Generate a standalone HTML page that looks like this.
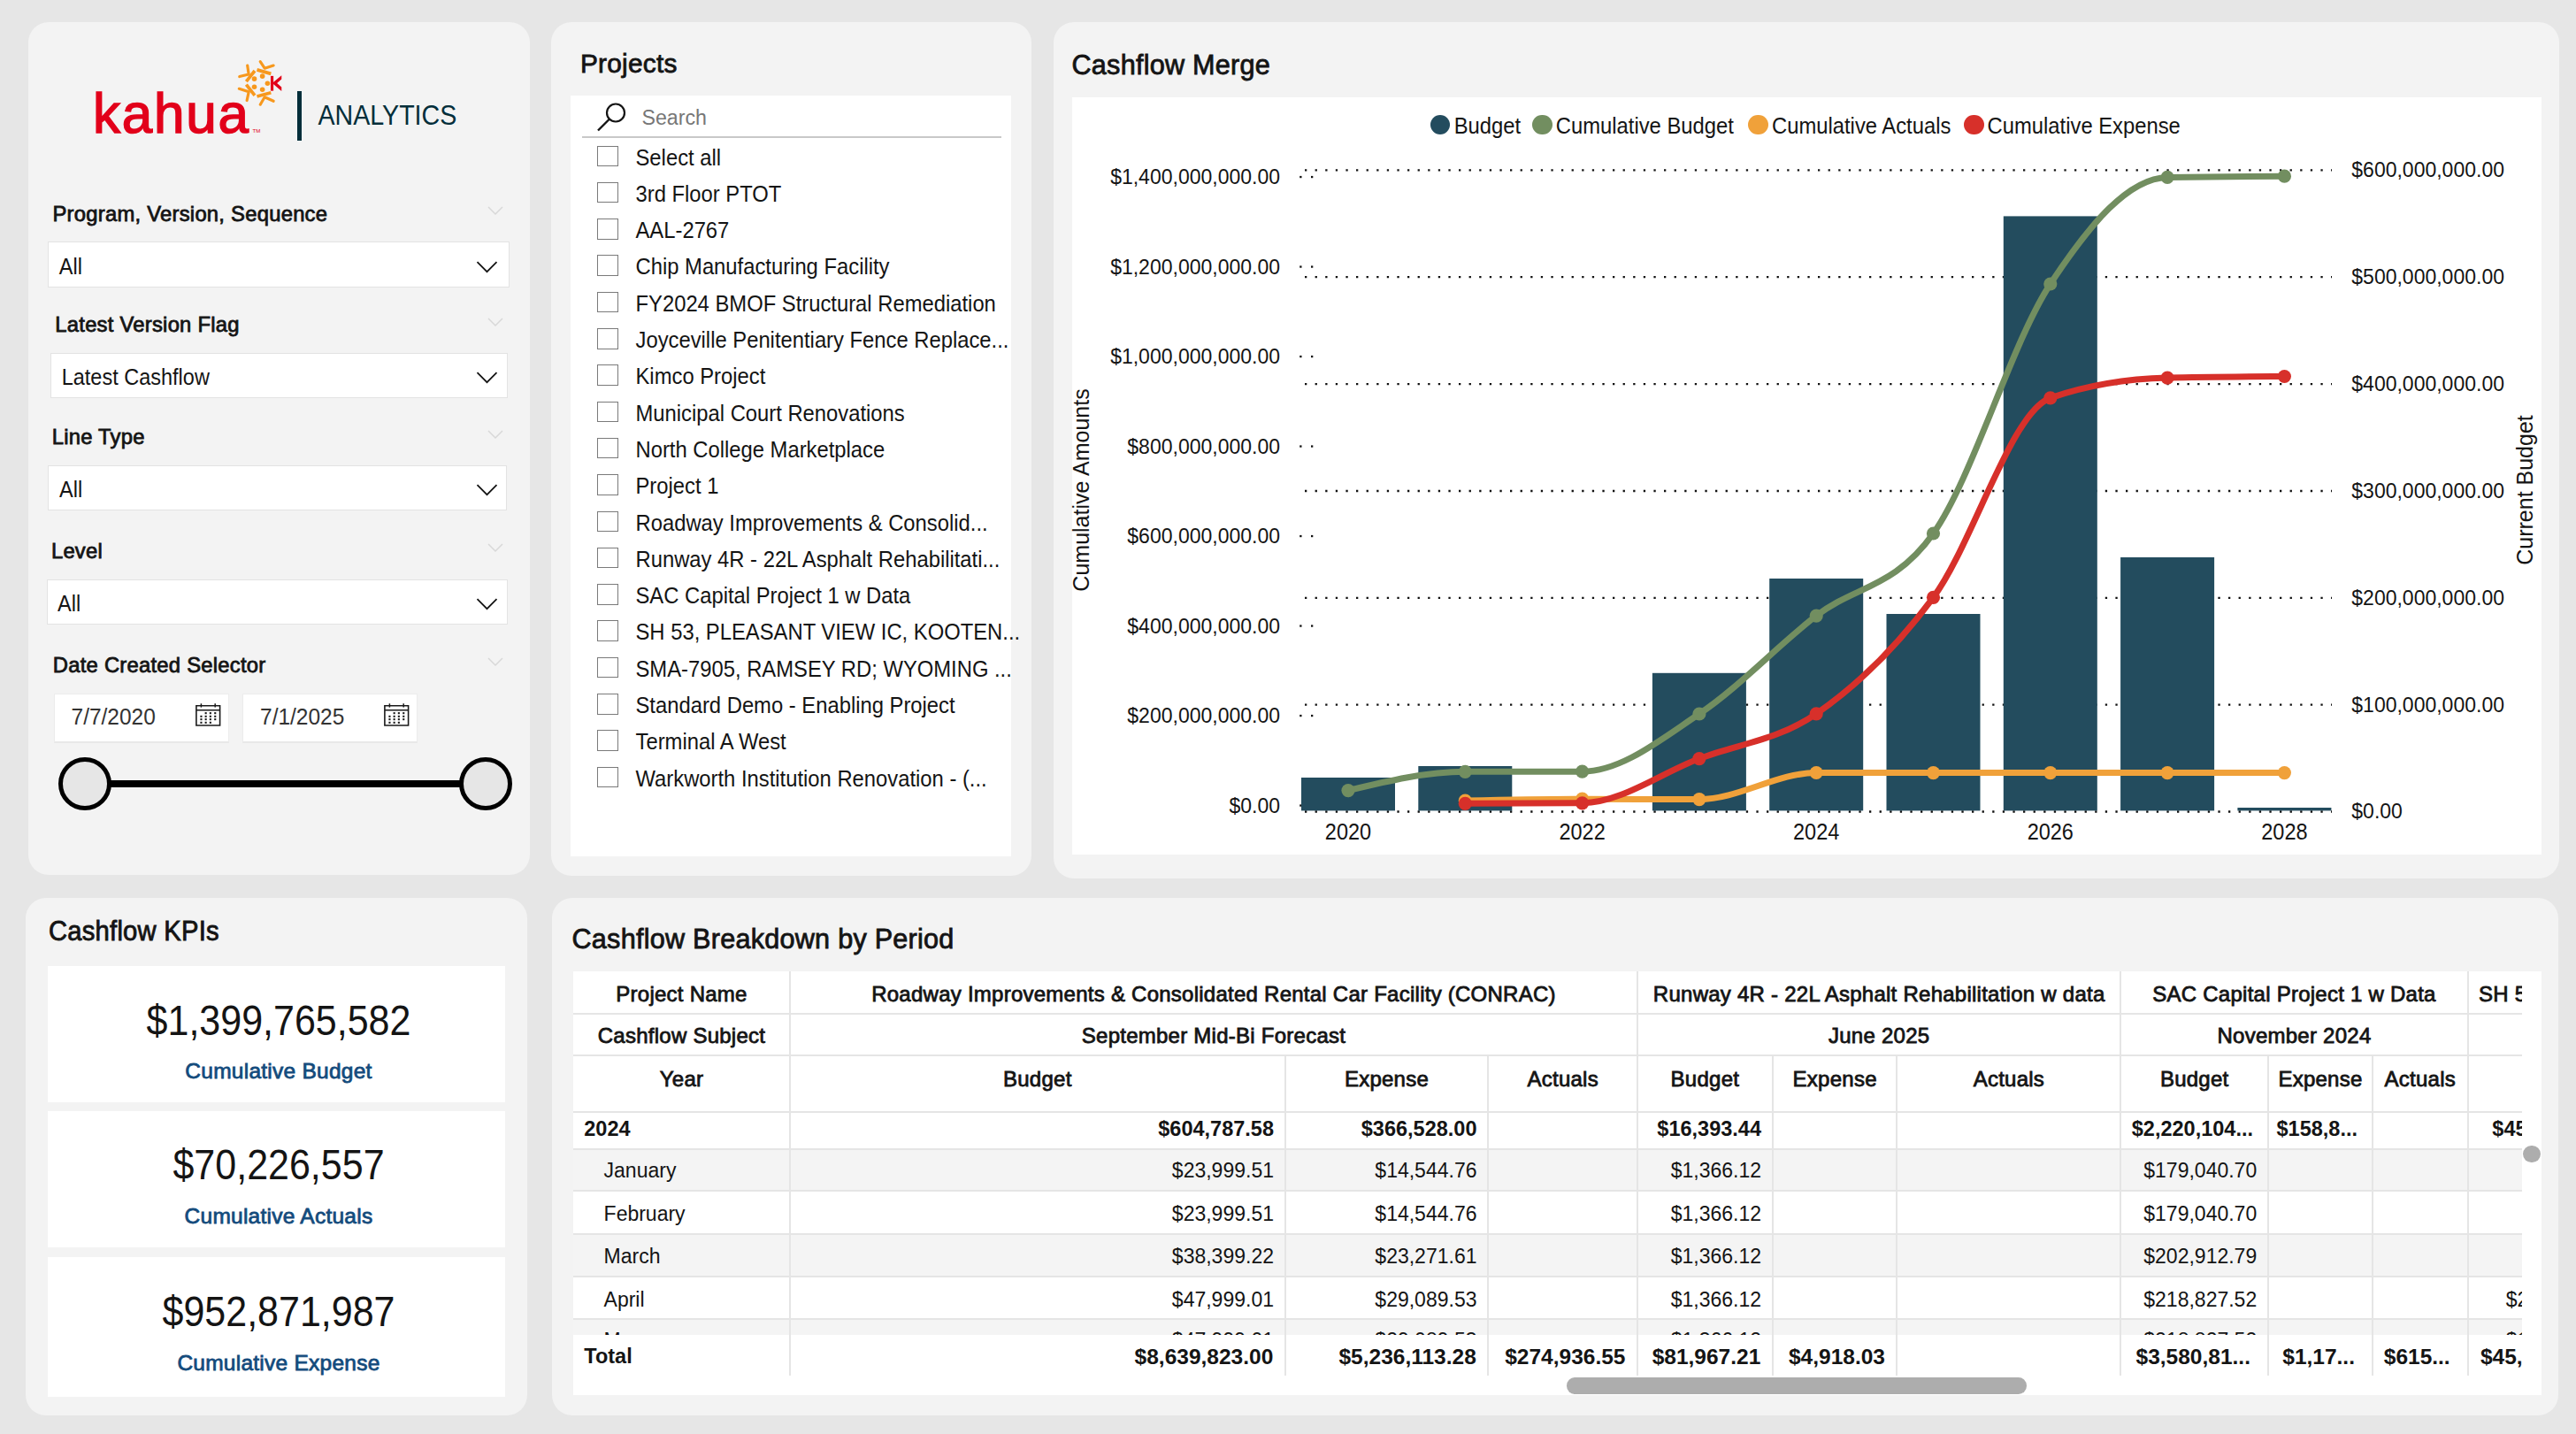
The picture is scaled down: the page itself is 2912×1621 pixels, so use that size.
<!DOCTYPE html>
<html><head><meta charset="utf-8"><title>Cashflow Dashboard</title>
<style>
html,body{margin:0;padding:0;}
body{width:2912px;height:1621px;background:#e6e6e6;position:relative;overflow:hidden;font-family:"Liberation Sans",sans-serif;}
.r{position:absolute;}
.t{position:absolute;white-space:nowrap;line-height:1;font-family:"Liberation Sans",sans-serif;}
</style></head><body>
<div class="r" style="left:32.0px;top:24.5px;width:567.0px;height:964.5px;background:#f3f3f3;border-radius:23px;"></div>
<svg class="r" style="left:90px;top:50px;width:240px;height:120px" viewBox="0 0 2576 1288">
<text x="160" y="1078" font-family="Liberation Sans" font-size="666" fill="#e2001a" stroke="#e2001a" stroke-width="16" letter-spacing="19">kahua</text>
<text x="2098" y="1078" font-family="Liberation Sans" font-size="66" fill="#e2001a">TM</text>
<g stroke="#f7981d" stroke-width="40" fill="none" stroke-linecap="butt">
<line x1="2022" y1="452" x2="2125" y2="322"/>
<line x1="2152" y1="310" x2="2322" y2="358"/>
<line x1="2022" y1="490" x2="2125" y2="622"/>
<line x1="2152" y1="634" x2="2322" y2="588"/>
</g>
<g stroke="#f7981d" stroke-width="34" fill="none" stroke-linecap="round" stroke-linejoin="round">
<path d="M2036 258 L2052 365 L1940 392"/>
<path d="M2192 210 L2245 292 L2352 258"/>
<path d="M1935 540 L2052 578 L2030 682"/>
<path d="M2192 732 L2245 642 L2352 690"/>
</g>
<g fill="#f7981d"><circle cx="2120" cy="420" r="30"/><circle cx="2218" cy="388" r="30"/><circle cx="2280" cy="475" r="30"/><circle cx="2218" cy="550" r="30"/><circle cx="2120" cy="518" r="30"/></g>
<rect x="2318" y="385" width="34" height="180" fill="#e2001a"/>
<path d="M2350 462 L2450 378 L2450 425 L2395 472 L2450 520 L2450 568 L2350 482 Z" fill="#e2001a"/>
</svg>
<div class="r" style="left:336.0px;top:103.0px;width:5.3px;height:55.7px;background:#032e3a;"></div>
<div class="t" style="top:116.6px;font-size:28.6px;font-weight:400;color:#032e3a;transform:scaleY(1.07);transform-origin:0 24.21px;left:359.5px;">ANALYTICS</div>
<div class="t" style="top:229.9px;font-size:23.8px;font-weight:400;color:#141414;-webkit-text-stroke:0.8px #141414;letter-spacing:0.25px;left:59.5px;">Program, Version, Sequence</div>
<svg class="r" style="left:551px;top:233px;width:18px;height:11px" viewBox="0 0 18 11"><path d="M1 1 L9 9 L17 1" stroke="#d8d8d8" stroke-width="1.5" fill="none"/></svg>
<div class="r" style="left:53.5px;top:273.0px;width:522.0px;height:52.0px;background:#ffffff;box-sizing:border-box;border:1px solid #e3e3e3;"></div>
<div class="t" style="top:291.1px;font-size:23.5px;font-weight:400;color:#141414;transform:scaleY(1.07);transform-origin:0 19.89px;left:66.8px;">All</div>
<svg class="r" style="left:538px;top:294.7px;width:26px;height:16px" viewBox="0 0 26 16"><path d="M1.5 1.2 L12.5 12.2 L23.5 1.2" stroke="#141414" stroke-width="1.8" fill="none"/></svg>
<div class="t" style="top:355.4px;font-size:23.8px;font-weight:400;color:#141414;-webkit-text-stroke:0.8px #141414;letter-spacing:0.25px;left:62.3px;">Latest Version Flag</div>
<svg class="r" style="left:551px;top:359px;width:18px;height:11px" viewBox="0 0 18 11"><path d="M1 1 L9 9 L17 1" stroke="#d8d8d8" stroke-width="1.5" fill="none"/></svg>
<div class="r" style="left:57.0px;top:398.5px;width:516.5px;height:51.5px;background:#ffffff;box-sizing:border-box;border:1px solid #e3e3e3;"></div>
<div class="t" style="top:415.9px;font-size:23.5px;font-weight:400;color:#141414;transform:scaleY(1.07);transform-origin:0 19.89px;left:69.7px;">Latest Cashflow</div>
<svg class="r" style="left:538px;top:419.9px;width:26px;height:16px" viewBox="0 0 26 16"><path d="M1.5 1.2 L12.5 12.2 L23.5 1.2" stroke="#141414" stroke-width="1.8" fill="none"/></svg>
<div class="t" style="top:482.4px;font-size:23.8px;font-weight:400;color:#141414;-webkit-text-stroke:0.8px #141414;letter-spacing:0.25px;left:58.7px;">Line Type</div>
<svg class="r" style="left:551px;top:486px;width:18px;height:11px" viewBox="0 0 18 11"><path d="M1 1 L9 9 L17 1" stroke="#d8d8d8" stroke-width="1.5" fill="none"/></svg>
<div class="r" style="left:53.7px;top:526.0px;width:519.8px;height:51.3px;background:#ffffff;box-sizing:border-box;border:1px solid #e3e3e3;"></div>
<div class="t" style="top:543.1px;font-size:23.5px;font-weight:400;color:#141414;transform:scaleY(1.07);transform-origin:0 19.89px;left:67.0px;">All</div>
<svg class="r" style="left:538px;top:547.4px;width:26px;height:16px" viewBox="0 0 26 16"><path d="M1.5 1.2 L12.5 12.2 L23.5 1.2" stroke="#141414" stroke-width="1.8" fill="none"/></svg>
<div class="t" style="top:610.9px;font-size:23.8px;font-weight:400;color:#141414;-webkit-text-stroke:0.8px #141414;letter-spacing:0.25px;left:57.9px;">Level</div>
<svg class="r" style="left:551px;top:614px;width:18px;height:11px" viewBox="0 0 18 11"><path d="M1 1 L9 9 L17 1" stroke="#d8d8d8" stroke-width="1.5" fill="none"/></svg>
<div class="r" style="left:52.5px;top:655.0px;width:521.0px;height:51.0px;background:#ffffff;box-sizing:border-box;border:1px solid #e3e3e3;"></div>
<div class="t" style="top:671.7px;font-size:23.5px;font-weight:400;color:#141414;transform:scaleY(1.07);transform-origin:0 19.89px;left:65.0px;">All</div>
<svg class="r" style="left:538px;top:676.2px;width:26px;height:16px" viewBox="0 0 26 16"><path d="M1.5 1.2 L12.5 12.2 L23.5 1.2" stroke="#141414" stroke-width="1.8" fill="none"/></svg>
<div class="t" style="top:739.7px;font-size:23.8px;font-weight:400;color:#141414;-webkit-text-stroke:0.8px #141414;letter-spacing:0.25px;left:59.8px;">Date Created Selector</div>
<svg class="r" style="left:551px;top:743px;width:18px;height:11px" viewBox="0 0 18 11"><path d="M1 1 L9 9 L17 1" stroke="#d8d8d8" stroke-width="1.5" fill="none"/></svg>
<div class="r" style="left:61.3px;top:783.6px;width:197.5px;height:56.7px;background:#ffffff;box-sizing:border-box;border:1px solid #ececec;border-bottom:2px solid #e8e8e8;"></div>
<div class="t" style="top:799.3px;font-size:24.5px;font-weight:400;color:#333333;transform:scaleY(1.07);transform-origin:0 20.74px;left:80.5px;">7/7/2020</div>
<svg class="r" style="left:221px;top:794px;width:30px;height:28px" viewBox="0 0 30 28">
<path d="M0.9 3.7 H27.6 V26 H0.9 Z M0.9 8.8 H27.6" fill="none" stroke="#1a1a1a" stroke-width="1.6"/>
<line x1="6.4" y1="1.3" x2="6.4" y2="5.6" stroke="#1a1a1a" stroke-width="1.5"/><line x1="22.2" y1="1.3" x2="22.2" y2="5.6" stroke="#1a1a1a" stroke-width="1.5"/>
<g fill="#1a1a1a"><rect x="10.6" y="11.1" width="2.1" height="2.1"/><rect x="15.8" y="11.1" width="2.1" height="2.1"/><rect x="21.2" y="11.1" width="2.1" height="2.1"/><rect x="5.4" y="14.8" width="2.1" height="2.1"/><rect x="10.6" y="14.8" width="2.1" height="2.1"/><rect x="15.8" y="14.8" width="2.1" height="2.1"/><rect x="21.2" y="14.8" width="2.1" height="2.1"/><rect x="5.4" y="18.1" width="2.1" height="2.1"/><rect x="10.6" y="18.1" width="2.1" height="2.1"/><rect x="15.8" y="18.1" width="2.1" height="2.1"/><rect x="21.2" y="18.1" width="2.1" height="2.1"/><rect x="5.4" y="21.8" width="2.1" height="2.1"/><rect x="10.6" y="21.8" width="2.1" height="2.1"/><rect x="15.8" y="21.8" width="2.1" height="2.1"/></g></svg>
<div class="r" style="left:274.0px;top:783.6px;width:198.4px;height:56.7px;background:#ffffff;box-sizing:border-box;border:1px solid #ececec;border-bottom:2px solid #e8e8e8;"></div>
<div class="t" style="top:799.3px;font-size:24.5px;font-weight:400;color:#333333;transform:scaleY(1.07);transform-origin:0 20.74px;left:294.0px;">7/1/2025</div>
<svg class="r" style="left:434px;top:794px;width:30px;height:28px" viewBox="0 0 30 28">
<path d="M0.9 3.7 H27.6 V26 H0.9 Z M0.9 8.8 H27.6" fill="none" stroke="#1a1a1a" stroke-width="1.6"/>
<line x1="6.4" y1="1.3" x2="6.4" y2="5.6" stroke="#1a1a1a" stroke-width="1.5"/><line x1="22.2" y1="1.3" x2="22.2" y2="5.6" stroke="#1a1a1a" stroke-width="1.5"/>
<g fill="#1a1a1a"><rect x="10.6" y="11.1" width="2.1" height="2.1"/><rect x="15.8" y="11.1" width="2.1" height="2.1"/><rect x="21.2" y="11.1" width="2.1" height="2.1"/><rect x="5.4" y="14.8" width="2.1" height="2.1"/><rect x="10.6" y="14.8" width="2.1" height="2.1"/><rect x="15.8" y="14.8" width="2.1" height="2.1"/><rect x="21.2" y="14.8" width="2.1" height="2.1"/><rect x="5.4" y="18.1" width="2.1" height="2.1"/><rect x="10.6" y="18.1" width="2.1" height="2.1"/><rect x="15.8" y="18.1" width="2.1" height="2.1"/><rect x="21.2" y="18.1" width="2.1" height="2.1"/><rect x="5.4" y="21.8" width="2.1" height="2.1"/><rect x="10.6" y="21.8" width="2.1" height="2.1"/><rect x="15.8" y="21.8" width="2.1" height="2.1"/></g></svg>
<div class="r" style="left:124.0px;top:882.0px;width:396.0px;height:8.0px;background:#000000;"></div>
<div class="r" style="left:66px;top:856px;width:60px;height:60px;border-radius:50%;background:#e6e6e6;box-sizing:border-box;border:5px solid #000"></div>
<div class="r" style="left:518.5px;top:856px;width:60px;height:60px;border-radius:50%;background:#e6e6e6;box-sizing:border-box;border:5px solid #000"></div>
<div class="r" style="left:623.0px;top:24.5px;width:543.0px;height:965.5px;background:#f3f3f3;border-radius:23px;"></div>
<div class="t" style="top:56.8px;font-size:29.8px;font-weight:400;color:#141414;-webkit-text-stroke:0.8px #141414;letter-spacing:0.25px;left:656.0px;">Projects</div>
<div class="r" style="left:645.0px;top:108.0px;width:498.0px;height:860.0px;background:#ffffff;"></div>
<svg class="r" style="left:672px;top:113px;width:38px;height:38px" viewBox="0 0 38 38">
<circle cx="24" cy="14.5" r="10" fill="none" stroke="#141414" stroke-width="2.2"/>
<line x1="17" y1="21.5" x2="4" y2="34.5" stroke="#141414" stroke-width="2.4"/></svg>
<div class="t" style="top:121.9px;font-size:23.2px;font-weight:400;color:#777777;transform:scaleY(1.07);transform-origin:0 19.64px;left:725.5px;">Search</div>
<div class="r" style="left:657.5px;top:153.5px;width:474.2px;height:2.0px;background:#c8c8c8;"></div>
<div class="r" style="left:675.0px;top:164.5px;width:24.0px;height:23.5px;background:transparent;box-sizing:border-box;border:1.6px solid #7a7a7a;"></div>
<div class="t" style="top:166.5px;font-size:23.8px;font-weight:400;color:#141414;transform:scaleY(1.07);transform-origin:0 20.15px;left:718.5px;">Select all</div>
<div class="r" style="left:675.0px;top:205.8px;width:24.0px;height:23.5px;background:transparent;box-sizing:border-box;border:1.6px solid #7a7a7a;"></div>
<div class="t" style="top:207.8px;font-size:23.8px;font-weight:400;color:#141414;transform:scaleY(1.07);transform-origin:0 20.15px;left:718.5px;">3rd Floor PTOT</div>
<div class="r" style="left:675.0px;top:247.1px;width:24.0px;height:23.5px;background:transparent;box-sizing:border-box;border:1.6px solid #7a7a7a;"></div>
<div class="t" style="top:249.1px;font-size:23.8px;font-weight:400;color:#141414;transform:scaleY(1.07);transform-origin:0 20.15px;left:718.5px;">AAL-2767</div>
<div class="r" style="left:675.0px;top:288.4px;width:24.0px;height:23.5px;background:transparent;box-sizing:border-box;border:1.6px solid #7a7a7a;"></div>
<div class="t" style="top:290.4px;font-size:23.8px;font-weight:400;color:#141414;transform:scaleY(1.07);transform-origin:0 20.15px;left:718.5px;">Chip Manufacturing Facility</div>
<div class="r" style="left:675.0px;top:329.7px;width:24.0px;height:23.5px;background:transparent;box-sizing:border-box;border:1.6px solid #7a7a7a;"></div>
<div class="t" style="top:331.7px;font-size:23.8px;font-weight:400;color:#141414;transform:scaleY(1.07);transform-origin:0 20.15px;left:718.5px;">FY2024 BMOF Structural Remediation</div>
<div class="r" style="left:675.0px;top:371.0px;width:24.0px;height:23.5px;background:transparent;box-sizing:border-box;border:1.6px solid #7a7a7a;"></div>
<div class="t" style="top:373.0px;font-size:23.8px;font-weight:400;color:#141414;transform:scaleY(1.07);transform-origin:0 20.15px;left:718.5px;">Joyceville Penitentiary Fence Replace...</div>
<div class="r" style="left:675.0px;top:412.3px;width:24.0px;height:23.5px;background:transparent;box-sizing:border-box;border:1.6px solid #7a7a7a;"></div>
<div class="t" style="top:414.3px;font-size:23.8px;font-weight:400;color:#141414;transform:scaleY(1.07);transform-origin:0 20.15px;left:718.5px;">Kimco Project</div>
<div class="r" style="left:675.0px;top:453.6px;width:24.0px;height:23.5px;background:transparent;box-sizing:border-box;border:1.6px solid #7a7a7a;"></div>
<div class="t" style="top:455.6px;font-size:23.8px;font-weight:400;color:#141414;transform:scaleY(1.07);transform-origin:0 20.15px;left:718.5px;">Municipal Court Renovations</div>
<div class="r" style="left:675.0px;top:494.9px;width:24.0px;height:23.5px;background:transparent;box-sizing:border-box;border:1.6px solid #7a7a7a;"></div>
<div class="t" style="top:496.9px;font-size:23.8px;font-weight:400;color:#141414;transform:scaleY(1.07);transform-origin:0 20.15px;left:718.5px;">North College Marketplace</div>
<div class="r" style="left:675.0px;top:536.2px;width:24.0px;height:23.5px;background:transparent;box-sizing:border-box;border:1.6px solid #7a7a7a;"></div>
<div class="t" style="top:538.2px;font-size:23.8px;font-weight:400;color:#141414;transform:scaleY(1.07);transform-origin:0 20.15px;left:718.5px;">Project 1</div>
<div class="r" style="left:675.0px;top:577.5px;width:24.0px;height:23.5px;background:transparent;box-sizing:border-box;border:1.6px solid #7a7a7a;"></div>
<div class="t" style="top:579.5px;font-size:23.8px;font-weight:400;color:#141414;transform:scaleY(1.07);transform-origin:0 20.15px;left:718.5px;">Roadway Improvements &amp; Consolid...</div>
<div class="r" style="left:675.0px;top:618.8px;width:24.0px;height:23.5px;background:transparent;box-sizing:border-box;border:1.6px solid #7a7a7a;"></div>
<div class="t" style="top:620.8px;font-size:23.8px;font-weight:400;color:#141414;transform:scaleY(1.07);transform-origin:0 20.15px;left:718.5px;">Runway 4R - 22L Asphalt Rehabilitati...</div>
<div class="r" style="left:675.0px;top:660.1px;width:24.0px;height:23.5px;background:transparent;box-sizing:border-box;border:1.6px solid #7a7a7a;"></div>
<div class="t" style="top:662.1px;font-size:23.8px;font-weight:400;color:#141414;transform:scaleY(1.07);transform-origin:0 20.15px;left:718.5px;">SAC Capital Project 1 w Data</div>
<div class="r" style="left:675.0px;top:701.4px;width:24.0px;height:23.5px;background:transparent;box-sizing:border-box;border:1.6px solid #7a7a7a;"></div>
<div class="t" style="top:703.4px;font-size:23.8px;font-weight:400;color:#141414;transform:scaleY(1.07);transform-origin:0 20.15px;left:718.5px;">SH 53, PLEASANT VIEW IC, KOOTEN...</div>
<div class="r" style="left:675.0px;top:742.7px;width:24.0px;height:23.5px;background:transparent;box-sizing:border-box;border:1.6px solid #7a7a7a;"></div>
<div class="t" style="top:744.7px;font-size:23.8px;font-weight:400;color:#141414;transform:scaleY(1.07);transform-origin:0 20.15px;left:718.5px;">SMA-7905, RAMSEY RD; WYOMING ...</div>
<div class="r" style="left:675.0px;top:784.0px;width:24.0px;height:23.5px;background:transparent;box-sizing:border-box;border:1.6px solid #7a7a7a;"></div>
<div class="t" style="top:786.0px;font-size:23.8px;font-weight:400;color:#141414;transform:scaleY(1.07);transform-origin:0 20.15px;left:718.5px;">Standard Demo - Enabling Project</div>
<div class="r" style="left:675.0px;top:825.3px;width:24.0px;height:23.5px;background:transparent;box-sizing:border-box;border:1.6px solid #7a7a7a;"></div>
<div class="t" style="top:827.3px;font-size:23.8px;font-weight:400;color:#141414;transform:scaleY(1.07);transform-origin:0 20.15px;left:718.5px;">Terminal A West</div>
<div class="r" style="left:675.0px;top:866.6px;width:24.0px;height:23.5px;background:transparent;box-sizing:border-box;border:1.6px solid #7a7a7a;"></div>
<div class="t" style="top:868.6px;font-size:23.8px;font-weight:400;color:#141414;transform:scaleY(1.07);transform-origin:0 20.15px;left:718.5px;">Warkworth Institution Renovation - (...</div>
<div class="r" style="left:1190.5px;top:24.5px;width:1702.0px;height:968.0px;background:#f3f3f3;border-radius:23px;"></div>
<div class="t" style="top:58.1px;font-size:30.6px;font-weight:400;color:#141414;-webkit-text-stroke:0.8px #141414;letter-spacing:0.25px;left:1211.5px;">Cashflow Merge</div>
<div class="r" style="left:1212.0px;top:109.6px;width:1660.5px;height:856.4px;background:#ffffff;"></div>
<svg class="r" style="left:0;top:0;width:2912px;height:1000px" viewBox="0 0 2912 1000">
<line x1="1475" y1="917.5" x2="2636" y2="917.5" stroke="#111" stroke-width="2.3" stroke-linecap="butt" stroke-dasharray="2.3 9.3"/>
<line x1="1475" y1="796.6" x2="2636" y2="796.6" stroke="#111" stroke-width="2.3" stroke-linecap="butt" stroke-dasharray="2.3 9.3"/>
<line x1="1475" y1="675.8" x2="2636" y2="675.8" stroke="#111" stroke-width="2.3" stroke-linecap="butt" stroke-dasharray="2.3 9.3"/>
<line x1="1475" y1="555.0" x2="2636" y2="555.0" stroke="#111" stroke-width="2.3" stroke-linecap="butt" stroke-dasharray="2.3 9.3"/>
<line x1="1475" y1="434.1" x2="2636" y2="434.1" stroke="#111" stroke-width="2.3" stroke-linecap="butt" stroke-dasharray="2.3 9.3"/>
<line x1="1475" y1="313.2" x2="2636" y2="313.2" stroke="#111" stroke-width="2.3" stroke-linecap="butt" stroke-dasharray="2.3 9.3"/>
<line x1="1475" y1="192.4" x2="2636" y2="192.4" stroke="#111" stroke-width="2.3" stroke-linecap="butt" stroke-dasharray="2.3 9.3"/>
<rect x="1469.2" y="909.4" width="2.3" height="2.3" fill="#111"/><rect x="1482" y="909.4" width="2.3" height="2.3" fill="#111"/>
<rect x="1469.2" y="807.9" width="2.3" height="2.3" fill="#111"/><rect x="1482" y="807.9" width="2.3" height="2.3" fill="#111"/>
<rect x="1469.2" y="706.4" width="2.3" height="2.3" fill="#111"/><rect x="1482" y="706.4" width="2.3" height="2.3" fill="#111"/>
<rect x="1469.2" y="604.9" width="2.3" height="2.3" fill="#111"/><rect x="1482" y="604.9" width="2.3" height="2.3" fill="#111"/>
<rect x="1469.2" y="503.4" width="2.3" height="2.3" fill="#111"/><rect x="1482" y="503.4" width="2.3" height="2.3" fill="#111"/>
<rect x="1469.2" y="401.9" width="2.3" height="2.3" fill="#111"/><rect x="1482" y="401.9" width="2.3" height="2.3" fill="#111"/>
<rect x="1469.2" y="300.4" width="2.3" height="2.3" fill="#111"/><rect x="1482" y="300.4" width="2.3" height="2.3" fill="#111"/>
<rect x="1469.2" y="198.9" width="2.3" height="2.3" fill="#111"/><rect x="1482" y="198.9" width="2.3" height="2.3" fill="#111"/>
<rect x="1471.0" y="879" width="106" height="37.4" fill="#234c5e"/>
<rect x="1603.3" y="866" width="106" height="50.4" fill="#234c5e"/>
<rect x="1867.9" y="760.8" width="106" height="155.6" fill="#234c5e"/>
<rect x="2000.2" y="654" width="106" height="262.4" fill="#234c5e"/>
<rect x="2132.5" y="694" width="106" height="222.4" fill="#234c5e"/>
<rect x="2264.8" y="244.4" width="106" height="672.0" fill="#234c5e"/>
<rect x="2397.1" y="630" width="106" height="286.4" fill="#234c5e"/>
<rect x="2529.4" y="913" width="106" height="3.4" fill="#234c5e"/>
<path d="M1656.3,905.0 C1700.4,904.1 1744.5,903.2 1788.6,903.2 C1832.7,903.2 1876.8,903.6 1920.9,903.6 C1965.0,903.6 2009.1,873.5 2053.2,873.5 C2097.3,873.5 2141.4,873.6 2185.5,873.6 C2229.6,873.6 2273.7,873.6 2317.8,873.6 C2361.9,873.6 2406.0,873.6 2450.1,873.6 C2494.2,873.6 2538.3,873.6 2582.4,873.6" stroke="#f0a13a" stroke-width="7" fill="none" stroke-linecap="round"/>
<circle cx="1656.3" cy="905.0" r="7.6" fill="#f0a13a"/>
<circle cx="1788.6" cy="903.2" r="7.6" fill="#f0a13a"/>
<circle cx="1920.9" cy="903.6" r="7.6" fill="#f0a13a"/>
<circle cx="2053.2" cy="873.5" r="7.6" fill="#f0a13a"/>
<circle cx="2185.5" cy="873.6" r="7.6" fill="#f0a13a"/>
<circle cx="2317.8" cy="873.6" r="7.6" fill="#f0a13a"/>
<circle cx="2450.1" cy="873.6" r="7.6" fill="#f0a13a"/>
<circle cx="2582.4" cy="873.6" r="7.6" fill="#f0a13a"/>
<path d="M1524.0,893.6 C1568.1,883.0 1612.2,872.4 1656.3,872.3 C1700.4,872.2 1744.5,872.3 1788.6,872.2 C1832.7,872.1 1876.8,836.4 1920.9,807.0 C1965.0,777.6 2009.1,730.1 2053.2,696.1 C2097.3,662.1 2141.4,665.1 2185.5,603.0 C2229.6,540.9 2273.7,388.1 2317.8,321.0 C2361.9,253.9 2406.0,201.2 2450.1,200.4 C2494.2,199.6 2538.3,199.4 2582.4,199.2" stroke="#728e60" stroke-width="7" fill="none" stroke-linecap="round"/>
<circle cx="1524.0" cy="893.6" r="7.6" fill="#728e60"/>
<circle cx="1656.3" cy="872.3" r="7.6" fill="#728e60"/>
<circle cx="1788.6" cy="872.2" r="7.6" fill="#728e60"/>
<circle cx="1920.9" cy="807.0" r="7.6" fill="#728e60"/>
<circle cx="2053.2" cy="696.1" r="7.6" fill="#728e60"/>
<circle cx="2185.5" cy="603.0" r="7.6" fill="#728e60"/>
<circle cx="2317.8" cy="321.0" r="7.6" fill="#728e60"/>
<circle cx="2450.1" cy="200.4" r="7.6" fill="#728e60"/>
<circle cx="2582.4" cy="199.2" r="7.6" fill="#728e60"/>
<path d="M1656.3,908.3 C1700.4,908.2 1744.5,908.1 1788.6,907.8 C1832.7,907.5 1876.8,874.4 1920.9,857.6 C1965.0,840.8 2009.1,837.2 2053.2,806.8 C2097.3,776.4 2141.4,734.8 2185.5,675.3 C2229.6,615.8 2273.7,465.1 2317.8,449.9 C2361.9,434.7 2406.0,428.2 2450.1,427.1 C2494.2,426.0 2538.3,425.8 2582.4,425.5" stroke="#d7302a" stroke-width="7" fill="none" stroke-linecap="round"/>
<circle cx="1656.3" cy="908.3" r="7.6" fill="#d7302a"/>
<circle cx="1788.6" cy="907.8" r="7.6" fill="#d7302a"/>
<circle cx="1920.9" cy="857.6" r="7.6" fill="#d7302a"/>
<circle cx="2053.2" cy="806.8" r="7.6" fill="#d7302a"/>
<circle cx="2185.5" cy="675.3" r="7.6" fill="#d7302a"/>
<circle cx="2317.8" cy="449.9" r="7.6" fill="#d7302a"/>
<circle cx="2450.1" cy="427.1" r="7.6" fill="#d7302a"/>
<circle cx="2582.4" cy="425.5" r="7.6" fill="#d7302a"/>
</svg>
<div class="t" style="top:899.6px;font-size:23px;font-weight:400;color:#141414;transform:scaleY(1.07);transform-origin:0 19.47px;left:1147.0px;width:300px;text-align:right;">$0.00</div>
<div class="t" style="top:798.1px;font-size:23px;font-weight:400;color:#141414;transform:scaleY(1.07);transform-origin:0 19.47px;left:1147.0px;width:300px;text-align:right;">$200,000,000.00</div>
<div class="t" style="top:696.6px;font-size:23px;font-weight:400;color:#141414;transform:scaleY(1.07);transform-origin:0 19.47px;left:1147.0px;width:300px;text-align:right;">$400,000,000.00</div>
<div class="t" style="top:595.1px;font-size:23px;font-weight:400;color:#141414;transform:scaleY(1.07);transform-origin:0 19.47px;left:1147.0px;width:300px;text-align:right;">$600,000,000.00</div>
<div class="t" style="top:493.6px;font-size:23px;font-weight:400;color:#141414;transform:scaleY(1.07);transform-origin:0 19.47px;left:1147.0px;width:300px;text-align:right;">$800,000,000.00</div>
<div class="t" style="top:392.1px;font-size:23px;font-weight:400;color:#141414;transform:scaleY(1.07);transform-origin:0 19.47px;left:1147.0px;width:300px;text-align:right;">$1,000,000,000.00</div>
<div class="t" style="top:290.6px;font-size:23px;font-weight:400;color:#141414;transform:scaleY(1.07);transform-origin:0 19.47px;left:1147.0px;width:300px;text-align:right;">$1,200,000,000.00</div>
<div class="t" style="top:189.1px;font-size:23px;font-weight:400;color:#141414;transform:scaleY(1.07);transform-origin:0 19.47px;left:1147.0px;width:300px;text-align:right;">$1,400,000,000.00</div>
<div class="t" style="top:906.4px;font-size:23px;font-weight:400;color:#141414;transform:scaleY(1.07);transform-origin:0 19.47px;left:2658.3px;">$0.00</div>
<div class="t" style="top:785.6px;font-size:23px;font-weight:400;color:#141414;transform:scaleY(1.07);transform-origin:0 19.47px;left:2658.3px;">$100,000,000.00</div>
<div class="t" style="top:664.7px;font-size:23px;font-weight:400;color:#141414;transform:scaleY(1.07);transform-origin:0 19.47px;left:2658.3px;">$200,000,000.00</div>
<div class="t" style="top:543.9px;font-size:23px;font-weight:400;color:#141414;transform:scaleY(1.07);transform-origin:0 19.47px;left:2658.3px;">$300,000,000.00</div>
<div class="t" style="top:423.0px;font-size:23px;font-weight:400;color:#141414;transform:scaleY(1.07);transform-origin:0 19.47px;left:2658.3px;">$400,000,000.00</div>
<div class="t" style="top:302.2px;font-size:23px;font-weight:400;color:#141414;transform:scaleY(1.07);transform-origin:0 19.47px;left:2658.3px;">$500,000,000.00</div>
<div class="t" style="top:181.3px;font-size:23px;font-weight:400;color:#141414;transform:scaleY(1.07);transform-origin:0 19.47px;left:2658.3px;">$600,000,000.00</div>
<div class="t" style="top:929.6px;font-size:23.5px;font-weight:400;color:#141414;transform:scaleY(1.07);transform-origin:0 19.89px;left:1464.0px;width:120px;text-align:center;">2020</div>
<div class="t" style="top:929.6px;font-size:23.5px;font-weight:400;color:#141414;transform:scaleY(1.07);transform-origin:0 19.89px;left:1728.6px;width:120px;text-align:center;">2022</div>
<div class="t" style="top:929.6px;font-size:23.5px;font-weight:400;color:#141414;transform:scaleY(1.07);transform-origin:0 19.89px;left:1993.2px;width:120px;text-align:center;">2024</div>
<div class="t" style="top:929.6px;font-size:23.5px;font-weight:400;color:#141414;transform:scaleY(1.07);transform-origin:0 19.89px;left:2257.8px;width:120px;text-align:center;">2026</div>
<div class="t" style="top:929.6px;font-size:23.5px;font-weight:400;color:#141414;transform:scaleY(1.07);transform-origin:0 19.89px;left:2522.4px;width:120px;text-align:center;">2028</div>
<div class="r" style="left:1616.7px;top:129.7px;width:22.6px;height:22.6px;border-radius:50%;background:#234c5e"></div>
<div class="t" style="top:130.5px;font-size:23.8px;font-weight:400;color:#141414;transform:scaleY(1.07);transform-origin:0 20.15px;left:1643.7px;">Budget</div>
<div class="r" style="left:1732.0px;top:129.7px;width:22.6px;height:22.6px;border-radius:50%;background:#728e60"></div>
<div class="t" style="top:130.5px;font-size:23.8px;font-weight:400;color:#141414;transform:scaleY(1.07);transform-origin:0 20.15px;left:1758.8px;">Cumulative Budget</div>
<div class="r" style="left:1976.3px;top:129.7px;width:22.6px;height:22.6px;border-radius:50%;background:#f0a13a"></div>
<div class="t" style="top:130.5px;font-size:23.8px;font-weight:400;color:#141414;transform:scaleY(1.07);transform-origin:0 20.15px;left:2003.0px;">Cumulative Actuals</div>
<div class="r" style="left:2220.1px;top:129.7px;width:22.6px;height:22.6px;border-radius:50%;background:#d7302a"></div>
<div class="t" style="top:130.5px;font-size:23.8px;font-weight:400;color:#141414;transform:scaleY(1.07);transform-origin:0 20.15px;left:2246.6px;">Cumulative Expense</div>
<div class="t" style="left:1071.7px;top:542.0px;width:300px;height:24px;line-height:24px;font-size:25px;text-align:center;color:#141414;transform:rotate(-90deg)">Cumulative Amounts</div>
<div class="t" style="left:2704.0px;top:542.0px;width:300px;height:24px;line-height:24px;font-size:25px;text-align:center;color:#141414;transform:rotate(-90deg)">Current Budget</div>
<div class="r" style="left:29.0px;top:1015.0px;width:567.0px;height:585.0px;background:#f3f3f3;border-radius:23px;"></div>
<div class="t" style="top:1038.7px;font-size:29.2px;font-weight:400;color:#141414;-webkit-text-stroke:0.8px #141414;letter-spacing:0.25px;transform:scaleY(1.08);transform-origin:0 24.72px;left:54.9px;">Cashflow KPIs</div>
<div class="r" style="left:54.0px;top:1092.3px;width:517.0px;height:154.1px;background:#ffffff;"></div>
<div class="t" style="top:1133.6px;font-size:43px;font-weight:400;color:#141414;transform:scaleY(1.1);transform-origin:0 36.40px;left:65.0px;width:500px;text-align:center;">$1,399,765,582</div>
<div class="t" style="top:1198.9px;font-size:24.5px;font-weight:400;color:#134b7c;-webkit-text-stroke:0.8px #134b7c;letter-spacing:0.25px;left:65.0px;width:500px;text-align:center;">Cumulative Budget</div>
<div class="r" style="left:54.0px;top:1255.8px;width:517.0px;height:154.7px;background:#ffffff;"></div>
<div class="t" style="top:1296.6px;font-size:43px;font-weight:400;color:#141414;transform:scaleY(1.1);transform-origin:0 36.40px;left:65.0px;width:500px;text-align:center;">$70,226,557</div>
<div class="t" style="top:1363.0px;font-size:24.5px;font-weight:400;color:#134b7c;-webkit-text-stroke:0.8px #134b7c;letter-spacing:0.25px;left:65.0px;width:500px;text-align:center;">Cumulative Actuals</div>
<div class="r" style="left:54.0px;top:1421.2px;width:517.0px;height:157.8px;background:#ffffff;"></div>
<div class="t" style="top:1463.0px;font-size:43px;font-weight:400;color:#141414;transform:scaleY(1.1);transform-origin:0 36.40px;left:65.0px;width:500px;text-align:center;">$952,871,987</div>
<div class="t" style="top:1529.3px;font-size:24.5px;font-weight:400;color:#134b7c;-webkit-text-stroke:0.8px #134b7c;letter-spacing:0.25px;left:65.0px;width:500px;text-align:center;">Cumulative Expense</div>
<div class="r" style="left:624.3px;top:1015.2px;width:2268.2px;height:584.8px;background:#f3f3f3;border-radius:23px;"></div>
<div class="t" style="top:1045.6px;font-size:30.6px;font-weight:400;color:#141414;-webkit-text-stroke:0.8px #141414;letter-spacing:0.25px;left:646.5px;">Cashflow Breakdown by Period</div>
<div class="r" style="left:648.2px;top:1098.2px;width:2224.8px;height:479.0px;background:#ffffff;"></div>
<div class="r" style="left:648.2px;top:1098.2px;width:2202.8px;height:478.8px;overflow:hidden">
<div class="r" style="left:0.0px;top:200.8px;width:2351.8px;height:47.5px;background:#f4f4f4;"></div>
<div class="r" style="left:0.0px;top:296.8px;width:2351.8px;height:48.4px;background:#f4f4f4;"></div>
<div class="r" style="left:0.0px;top:393.2px;width:2351.8px;height:48.1px;background:#f4f4f4;"></div>
<div class="r" style="left:0.0px;top:46.6px;width:2351.8px;height:2.0px;background:#e5e5e5;"></div>
<div class="r" style="left:0.0px;top:94.1px;width:2351.8px;height:2.0px;background:#e5e5e5;"></div>
<div class="r" style="left:0.0px;top:157.9px;width:2351.8px;height:2.0px;background:#e5e5e5;"></div>
<div class="r" style="left:0.0px;top:199.8px;width:2351.8px;height:2.0px;background:#e5e5e5;"></div>
<div class="r" style="left:0.0px;top:247.3px;width:2351.8px;height:2.0px;background:#e5e5e5;"></div>
<div class="r" style="left:0.0px;top:295.8px;width:2351.8px;height:2.0px;background:#e5e5e5;"></div>
<div class="r" style="left:0.0px;top:344.2px;width:2351.8px;height:2.0px;background:#e5e5e5;"></div>
<div class="r" style="left:0.0px;top:392.2px;width:2351.8px;height:2.0px;background:#e5e5e5;"></div>
<div class="r" style="left:243.7px;top:0.0px;width:2.0px;height:456.5px;background:#e5e5e5;"></div>
<div class="r" style="left:803.6px;top:95.1px;width:2.0px;height:361.4px;background:#e5e5e5;"></div>
<div class="r" style="left:1033.1px;top:95.1px;width:2.0px;height:361.4px;background:#e5e5e5;"></div>
<div class="r" style="left:1201.8px;top:0.0px;width:2.0px;height:456.5px;background:#e5e5e5;"></div>
<div class="r" style="left:1354.6px;top:95.1px;width:2.0px;height:361.4px;background:#e5e5e5;"></div>
<div class="r" style="left:1495.3px;top:95.1px;width:2.0px;height:361.4px;background:#e5e5e5;"></div>
<div class="r" style="left:1748.1px;top:0.0px;width:2.0px;height:456.5px;background:#e5e5e5;"></div>
<div class="r" style="left:1914.8px;top:95.1px;width:2.0px;height:361.4px;background:#e5e5e5;"></div>
<div class="r" style="left:2032.8px;top:95.1px;width:2.0px;height:361.4px;background:#e5e5e5;"></div>
<div class="r" style="left:2140.5px;top:0.0px;width:2.0px;height:456.5px;background:#e5e5e5;"></div>
<div class="t" style="top:14.1px;font-size:24.0px;font-weight:400;color:#141414;-webkit-text-stroke:0.8px #141414;letter-spacing:0.25px;left:2.3px;width:240px;text-align:center;">Project Name</div>
<div class="t" style="top:60.7px;font-size:24.0px;font-weight:400;color:#141414;-webkit-text-stroke:0.8px #141414;letter-spacing:0.25px;left:2.3px;width:240px;text-align:center;">Cashflow Subject</div>
<div class="t" style="top:109.8px;font-size:24.0px;font-weight:400;color:#141414;-webkit-text-stroke:0.8px #141414;letter-spacing:0.25px;left:2.3px;width:240px;text-align:center;">Year</div>
<div class="t" style="top:14.1px;font-size:24.0px;font-weight:400;color:#141414;-webkit-text-stroke:0.8px #141414;letter-spacing:0.25px;left:248.8px;width:950px;text-align:center;">Roadway Improvements &amp; Consolidated Rental Car Facility (CONRAC)</div>
<div class="t" style="top:60.7px;font-size:24.0px;font-weight:400;color:#141414;-webkit-text-stroke:0.8px #141414;letter-spacing:0.25px;left:248.8px;width:950px;text-align:center;">September Mid-Bi Forecast</div>
<div class="t" style="top:14.1px;font-size:24.0px;font-weight:400;color:#141414;-webkit-text-stroke:0.8px #141414;letter-spacing:0.25px;left:1206.0px;width:540px;text-align:center;">Runway 4R - 22L Asphalt Rehabilitation w data</div>
<div class="t" style="top:60.7px;font-size:24.0px;font-weight:400;color:#141414;-webkit-text-stroke:0.8px #141414;letter-spacing:0.25px;left:1206.0px;width:540px;text-align:center;">June 2025</div>
<div class="t" style="top:14.1px;font-size:24.0px;font-weight:400;color:#141414;-webkit-text-stroke:0.8px #141414;letter-spacing:0.25px;left:1750.3px;width:390px;text-align:center;">SAC Capital Project 1 w Data</div>
<div class="t" style="top:60.7px;font-size:24.0px;font-weight:400;color:#141414;-webkit-text-stroke:0.8px #141414;letter-spacing:0.25px;left:1750.3px;width:390px;text-align:center;">November 2024</div>
<div class="t" style="top:14.1px;font-size:24.0px;font-weight:400;color:#141414;-webkit-text-stroke:0.8px #141414;letter-spacing:0.25px;left:2153.7px;">SH 53, PLEASANT VIEW IC</div>
<div class="t" style="top:109.8px;font-size:24.0px;font-weight:400;color:#141414;-webkit-text-stroke:0.8px #141414;letter-spacing:0.25px;left:374.6px;width:300px;text-align:center;">Budget</div>
<div class="t" style="top:109.8px;font-size:24.0px;font-weight:400;color:#141414;-webkit-text-stroke:0.8px #141414;letter-spacing:0.25px;left:769.3px;width:300px;text-align:center;">Expense</div>
<div class="t" style="top:109.8px;font-size:24.0px;font-weight:400;color:#141414;-webkit-text-stroke:0.8px #141414;letter-spacing:0.25px;left:968.5px;width:300px;text-align:center;">Actuals</div>
<div class="t" style="top:109.8px;font-size:24.0px;font-weight:400;color:#141414;-webkit-text-stroke:0.8px #141414;letter-spacing:0.25px;left:1129.2px;width:300px;text-align:center;">Budget</div>
<div class="t" style="top:109.8px;font-size:24.0px;font-weight:400;color:#141414;-webkit-text-stroke:0.8px #141414;letter-spacing:0.25px;left:1276.0px;width:300px;text-align:center;">Expense</div>
<div class="t" style="top:109.8px;font-size:24.0px;font-weight:400;color:#141414;-webkit-text-stroke:0.8px #141414;letter-spacing:0.25px;left:1472.7px;width:300px;text-align:center;">Actuals</div>
<div class="t" style="top:109.8px;font-size:24.0px;font-weight:400;color:#141414;-webkit-text-stroke:0.8px #141414;letter-spacing:0.25px;left:1682.5px;width:300px;text-align:center;">Budget</div>
<div class="t" style="top:109.8px;font-size:24.0px;font-weight:400;color:#141414;-webkit-text-stroke:0.8px #141414;letter-spacing:0.25px;left:1824.8px;width:300px;text-align:center;">Expense</div>
<div class="t" style="top:109.8px;font-size:24.0px;font-weight:400;color:#141414;-webkit-text-stroke:0.8px #141414;letter-spacing:0.25px;left:1937.6px;width:300px;text-align:center;">Actuals</div>
<div class="t" style="top:166.8px;font-size:23.5px;font-weight:700;color:#141414;left:12.1px;">2024</div>
<div class="t" style="top:166.8px;font-size:23.5px;font-weight:700;color:#141414;left:391.8px;width:400px;text-align:right;">$604,787.58</div>
<div class="t" style="top:166.8px;font-size:23.5px;font-weight:700;color:#141414;left:621.3px;width:400px;text-align:right;">$366,528.00</div>
<div class="t" style="top:166.8px;font-size:23.5px;font-weight:700;color:#141414;left:942.8px;width:400px;text-align:right;">$16,393.44</div>
<div class="t" style="top:166.8px;font-size:23.5px;font-weight:700;color:#141414;left:1498.8px;width:400px;text-align:right;">$2,220,104...</div>
<div class="t" style="top:166.8px;font-size:23.5px;font-weight:700;color:#141414;left:1616.8px;width:400px;text-align:right;">$158,8...</div>
<div class="t" style="top:166.8px;font-size:23.5px;font-weight:700;color:#141414;left:1886.8px;width:400px;text-align:right;">$45,321.07</div>
<div class="t" style="top:214.3px;font-size:23px;font-weight:400;color:#141414;transform:scaleY(1.07);transform-origin:0 19.47px;left:34.4px;">January</div>
<div class="t" style="top:214.3px;font-size:23px;font-weight:400;color:#141414;transform:scaleY(1.07);transform-origin:0 19.47px;left:391.8px;width:400px;text-align:right;">$23,999.51</div>
<div class="t" style="top:214.3px;font-size:23px;font-weight:400;color:#141414;transform:scaleY(1.07);transform-origin:0 19.47px;left:621.3px;width:400px;text-align:right;">$14,544.76</div>
<div class="t" style="top:214.3px;font-size:23px;font-weight:400;color:#141414;transform:scaleY(1.07);transform-origin:0 19.47px;left:942.8px;width:400px;text-align:right;">$1,366.12</div>
<div class="t" style="top:214.3px;font-size:23px;font-weight:400;color:#141414;transform:scaleY(1.07);transform-origin:0 19.47px;left:1503.0px;width:400px;text-align:right;">$179,040.70</div>
<div class="t" style="top:263.1px;font-size:23px;font-weight:400;color:#141414;transform:scaleY(1.07);transform-origin:0 19.47px;left:34.4px;">February</div>
<div class="t" style="top:263.1px;font-size:23px;font-weight:400;color:#141414;transform:scaleY(1.07);transform-origin:0 19.47px;left:391.8px;width:400px;text-align:right;">$23,999.51</div>
<div class="t" style="top:263.1px;font-size:23px;font-weight:400;color:#141414;transform:scaleY(1.07);transform-origin:0 19.47px;left:621.3px;width:400px;text-align:right;">$14,544.76</div>
<div class="t" style="top:263.1px;font-size:23px;font-weight:400;color:#141414;transform:scaleY(1.07);transform-origin:0 19.47px;left:942.8px;width:400px;text-align:right;">$1,366.12</div>
<div class="t" style="top:263.1px;font-size:23px;font-weight:400;color:#141414;transform:scaleY(1.07);transform-origin:0 19.47px;left:1503.0px;width:400px;text-align:right;">$179,040.70</div>
<div class="t" style="top:311.3px;font-size:23px;font-weight:400;color:#141414;transform:scaleY(1.07);transform-origin:0 19.47px;left:34.4px;">March</div>
<div class="t" style="top:311.3px;font-size:23px;font-weight:400;color:#141414;transform:scaleY(1.07);transform-origin:0 19.47px;left:391.8px;width:400px;text-align:right;">$38,399.22</div>
<div class="t" style="top:311.3px;font-size:23px;font-weight:400;color:#141414;transform:scaleY(1.07);transform-origin:0 19.47px;left:621.3px;width:400px;text-align:right;">$23,271.61</div>
<div class="t" style="top:311.3px;font-size:23px;font-weight:400;color:#141414;transform:scaleY(1.07);transform-origin:0 19.47px;left:942.8px;width:400px;text-align:right;">$1,366.12</div>
<div class="t" style="top:311.3px;font-size:23px;font-weight:400;color:#141414;transform:scaleY(1.07);transform-origin:0 19.47px;left:1503.0px;width:400px;text-align:right;">$202,912.79</div>
<div class="t" style="top:359.7px;font-size:23px;font-weight:400;color:#141414;transform:scaleY(1.07);transform-origin:0 19.47px;left:34.4px;">April</div>
<div class="t" style="top:359.7px;font-size:23px;font-weight:400;color:#141414;transform:scaleY(1.07);transform-origin:0 19.47px;left:391.8px;width:400px;text-align:right;">$47,999.01</div>
<div class="t" style="top:359.7px;font-size:23px;font-weight:400;color:#141414;transform:scaleY(1.07);transform-origin:0 19.47px;left:621.3px;width:400px;text-align:right;">$29,089.53</div>
<div class="t" style="top:359.7px;font-size:23px;font-weight:400;color:#141414;transform:scaleY(1.07);transform-origin:0 19.47px;left:942.8px;width:400px;text-align:right;">$1,366.12</div>
<div class="t" style="top:359.7px;font-size:23px;font-weight:400;color:#141414;transform:scaleY(1.07);transform-origin:0 19.47px;left:1503.0px;width:400px;text-align:right;">$218,827.52</div>
<div class="t" style="top:359.7px;font-size:23px;font-weight:400;color:#141414;transform:scaleY(1.07);transform-origin:0 19.47px;left:1886.8px;width:400px;text-align:right;">$2,718.40</div>
<div class="t" style="top:406.3px;font-size:23px;font-weight:400;color:#141414;transform:scaleY(1.07);transform-origin:0 19.47px;left:34.4px;">May</div>
<div class="t" style="top:406.3px;font-size:23px;font-weight:400;color:#141414;transform:scaleY(1.07);transform-origin:0 19.47px;left:391.8px;width:400px;text-align:right;">$47,999.01</div>
<div class="t" style="top:406.3px;font-size:23px;font-weight:400;color:#141414;transform:scaleY(1.07);transform-origin:0 19.47px;left:621.3px;width:400px;text-align:right;">$29,089.53</div>
<div class="t" style="top:406.3px;font-size:23px;font-weight:400;color:#141414;transform:scaleY(1.07);transform-origin:0 19.47px;left:942.8px;width:400px;text-align:right;">$1,366.12</div>
<div class="t" style="top:406.3px;font-size:23px;font-weight:400;color:#141414;transform:scaleY(1.07);transform-origin:0 19.47px;left:1503.0px;width:400px;text-align:right;">$218,827.52</div>
<div class="t" style="top:406.3px;font-size:23px;font-weight:400;color:#141414;transform:scaleY(1.07);transform-origin:0 19.47px;left:1886.8px;width:400px;text-align:right;">$1,918.40</div>
<div class="r" style="left:0.0px;top:411.3px;width:2351.8px;height:47.5px;background:#ffffff;"></div>
<div class="r" style="left:243.7px;top:411.3px;width:2.0px;height:45.2px;background:#e5e5e5;"></div>
<div class="r" style="left:803.6px;top:411.3px;width:2.0px;height:45.2px;background:#e5e5e5;"></div>
<div class="r" style="left:1033.1px;top:411.3px;width:2.0px;height:45.2px;background:#e5e5e5;"></div>
<div class="r" style="left:1201.8px;top:411.3px;width:2.0px;height:45.2px;background:#e5e5e5;"></div>
<div class="r" style="left:1354.6px;top:411.3px;width:2.0px;height:45.2px;background:#e5e5e5;"></div>
<div class="r" style="left:1495.3px;top:411.3px;width:2.0px;height:45.2px;background:#e5e5e5;"></div>
<div class="r" style="left:1748.1px;top:411.3px;width:2.0px;height:45.2px;background:#e5e5e5;"></div>
<div class="r" style="left:1914.8px;top:411.3px;width:2.0px;height:45.2px;background:#e5e5e5;"></div>
<div class="r" style="left:2032.8px;top:411.3px;width:2.0px;height:45.2px;background:#e5e5e5;"></div>
<div class="r" style="left:2140.5px;top:411.3px;width:2.0px;height:45.2px;background:#e5e5e5;"></div>
<div class="t" style="top:424.2px;font-size:23.5px;font-weight:700;color:#141414;left:12.1px;">Total</div>
<div class="t" style="top:423.4px;font-size:24.5px;font-weight:700;color:#141414;left:391.1px;width:400px;text-align:right;">$8,639,823.00</div>
<div class="t" style="top:423.4px;font-size:24.5px;font-weight:700;color:#141414;left:620.6px;width:400px;text-align:right;">$5,236,113.28</div>
<div class="t" style="top:423.4px;font-size:24.5px;font-weight:700;color:#141414;left:789.3px;width:400px;text-align:right;">$274,936.55</div>
<div class="t" style="top:423.4px;font-size:24.5px;font-weight:700;color:#141414;left:942.1px;width:400px;text-align:right;">$81,967.21</div>
<div class="t" style="top:423.4px;font-size:24.5px;font-weight:700;color:#141414;left:1082.8px;width:400px;text-align:right;">$4,918.03</div>
<div class="t" style="top:423.4px;font-size:24.5px;font-weight:700;color:#141414;left:1495.8px;width:400px;text-align:right;">$3,580,81...</div>
<div class="t" style="top:423.4px;font-size:24.5px;font-weight:700;color:#141414;left:1613.8px;width:400px;text-align:right;">$1,17...</div>
<div class="t" style="top:423.4px;font-size:24.5px;font-weight:700;color:#141414;left:1721.5px;width:400px;text-align:right;">$615...</div>
<div class="t" style="top:423.4px;font-size:24.5px;font-weight:700;color:#141414;left:2155.8px;">$45,</div>
</div>
<div class="r" style="left:1771.0px;top:1557.2px;width:520.0px;height:18.6px;background:#adadad;border-radius:9.3px;"></div>
<div class="r" style="left:2852.2px;top:1294.7px;width:19.6px;height:19.6px;background:#adadad;border-radius:50%;"></div>
</body></html>
